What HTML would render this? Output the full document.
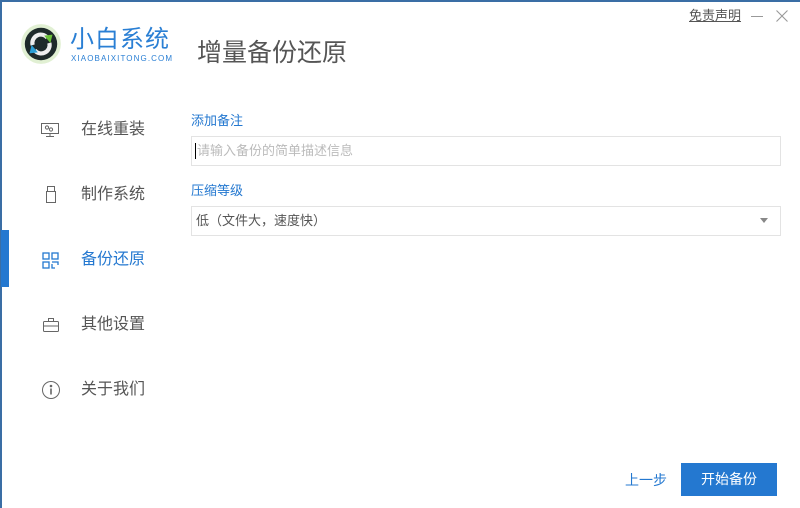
<!DOCTYPE html>
<html><head><meta charset="utf-8"><style>
*{margin:0;padding:0;box-sizing:border-box}
body{width:800px;height:508px;overflow:hidden;background:#fff;font-family:"Liberation Sans","Noto Sans CJK SC",sans-serif;position:relative}
.a{position:absolute}
.nav{position:absolute;left:81px;font-size:16px;line-height:20px;color:#555}
.ic{position:absolute;left:40px}
</style></head><body>
<div class="a" style="left:0;top:0;width:800px;height:2px;background:#3a6ea5"></div>
<div class="a" style="left:0;top:0;width:2px;height:508px;background:#3a6ea5"></div>
<!-- logo -->
<svg class="a" style="left:18px;top:22px" width="46" height="44" viewBox="0 0 44 42">
<circle cx="22" cy="21" r="19" fill="#d4eac0" opacity=".7"/>
<circle cx="22" cy="21" r="15.5" fill="#1e2a2a"/>
<path d="M14 22 a8 8 0 0 1 14 -7" stroke="#eee" stroke-width="4" fill="none"/>
<path d="M30 20 a8 8 0 0 1 -14 7" stroke="#eee" stroke-width="4" fill="none"/>
<path d="M25 13 l8 -1 -2 8z" fill="#6cc23a"/>
<path d="M19 29 l-8 1 2 -8z" fill="#2a9fd6"/>
</svg>
<div class="a" style="left:70px;top:26px;font-size:24px;line-height:28px;color:#2a7fd4;letter-spacing:1px">小白系统</div>
<div class="a" style="left:71px;top:54px;font-size:8px;line-height:9px;color:#2a7fd4;letter-spacing:1.1px">XIAOBAIXITONG.COM</div>
<div class="a" style="left:197px;top:37px;font-size:25px;line-height:32px;color:#555">增量备份还原</div>
<div class="a" style="left:689px;top:7px;font-size:13px;line-height:18px;color:#555;text-decoration:underline">免责声明</div>
<div class="a" style="left:751px;top:16px;width:12px;height:1px;background:#999"></div>
<svg class="a" style="left:776px;top:10px" width="12" height="12" viewBox="0 0 12 12" stroke="#999" stroke-width="1.1"><path d="M0.5 0.5L11.5 11.5M11.5 0.5L0.5 11.5"/></svg>
<!-- sidebar -->
<div class="a" style="left:1px;top:230px;width:8px;height:57px;background:#2478d0"></div>
<svg class="ic" style="top:122px" width="20" height="16" viewBox="0 0 20 16" fill="none" stroke="#666"><rect x="1.5" y="1.5" width="17" height="10"/><circle cx="7" cy="5.5" r="1.6"/><circle cx="11" cy="7.5" r="1.6"/><path d="M10 12v2M6 14.5h8"/></svg>
<div class="nav" style="top:120px">在线重装</div>
<svg class="ic" style="top:185px;left:45px" width="12" height="20" viewBox="0 0 12 20" fill="none" stroke="#666"><rect x="2.5" y="1.5" width="7" height="5"/><rect x="1.5" y="6.5" width="9" height="11"/></svg>
<div class="nav" style="top:185px">制作系统</div>
<svg class="ic" style="top:252px;left:42px" width="18" height="18" viewBox="0 0 18 18" fill="none" stroke="#2478d0" stroke-width="1.3"><rect x="1" y="1" width="6" height="6"/><rect x="1" y="10" width="6" height="6"/><rect x="10" y="1" width="6" height="6"/><path d="M10 10h6v3M10 12v4h3"/></svg>
<div class="nav" style="top:250px;color:#2478d0">备份还原</div>
<svg class="ic" style="top:317px;left:42px" width="18" height="16" viewBox="0 0 18 16" fill="none" stroke="#666"><rect x="1.5" y="4.5" width="15" height="10" rx="1"/><path d="M6.5 4.5v-3h5v3M1.5 9h15"/></svg>
<div class="nav" style="top:315px">其他设置</div>
<svg class="ic" style="top:380px;left:41px" width="20" height="20" viewBox="0 0 20 20" fill="none" stroke="#666"><circle cx="10" cy="10" r="8.5"/><path d="M10 8.5v6" stroke-width="1.6"/><circle cx="10" cy="6" r=".8" fill="#666"/></svg>
<div class="nav" style="top:380px">关于我们</div>
<!-- form -->
<div class="a" style="left:191px;top:112px;font-size:13px;line-height:18px;color:#2478d0">添加备注</div>
<div class="a" style="left:191px;top:136px;width:590px;height:30px;border:1px solid #e3e3e3"></div>
<div class="a" style="left:195px;top:143px;width:1px;height:16px;background:#000"></div>
<div class="a" style="left:197px;top:142px;font-size:13px;line-height:18px;color:#bbb">请输入备份的简单描述信息</div>
<div class="a" style="left:191px;top:182px;font-size:13px;line-height:18px;color:#2478d0">压缩等级</div>
<div class="a" style="left:191px;top:206px;width:590px;height:30px;border:1px solid #e3e3e3"></div>
<div class="a" style="left:196px;top:212px;font-size:13px;line-height:18px;color:#555">低（文件大，速度快）</div>
<div class="a" style="left:760px;top:218px;width:0;height:0;border-left:4px solid transparent;border-right:4px solid transparent;border-top:5px solid #888"></div>
<!-- buttons -->
<div class="a" style="left:625px;top:470px;font-size:14px;line-height:20px;color:#2478d0">上一步</div>
<div class="a" style="left:681px;top:463px;width:96px;height:33px;background:#2478d0;color:#fff;font-size:14px;text-align:center;line-height:32px">开始备份</div>
</body></html>
